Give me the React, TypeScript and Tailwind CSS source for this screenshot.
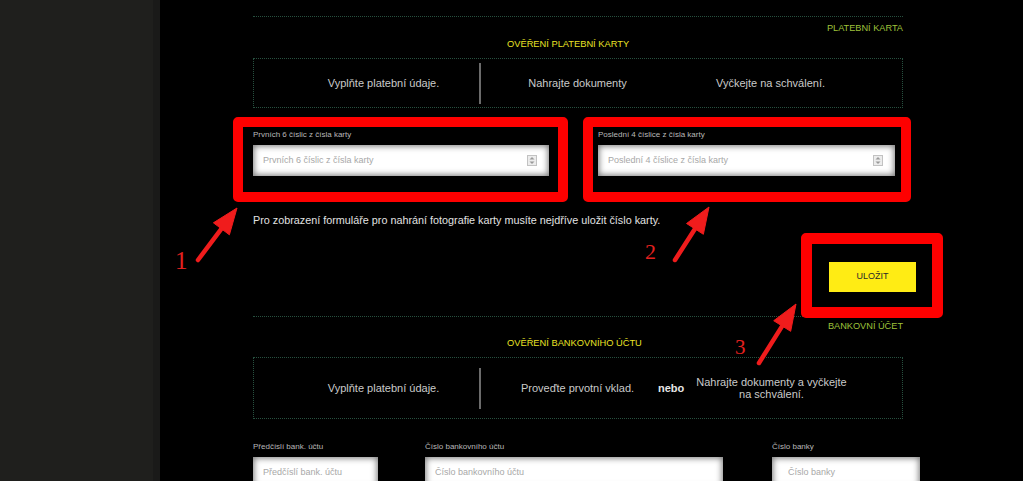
import React from "react";

type Pt = [number, number];

const Spinner = () => (
  <svg width="10" height="11" viewBox="0 0 10 11" className="shrink-0">
    <rect x="0.5" y="0.5" width="9" height="10" fill="#ececec" stroke="#c2c2c2" />
    <path d="M2.5 4.5 L5 2 L7.5 4.5 Z" fill="#999" />
    <path d="M2.5 6.5 L5 9 L7.5 6.5 Z" fill="#999" />
  </svg>
);

const Field = ({
  label,
  placeholder,
  width,
  spinner,
  className = "",
}: {
  label: string;
  placeholder: string;
  width: string;
  spinner?: boolean;
  className?: string;
}) => (
  <div className={`flex flex-col ${width} ${className}`}>
    <label className="text-[8px] leading-[10px] text-[#b8b8b8]">{label}</label>
    <div className="mt-[5px] flex h-[31px] items-center justify-between bg-white pl-[10px] pr-[12px] shadow-[inset_0_0_6px_1px_rgba(0,0,0,0.55)]">
      <span className="text-[9px] text-[#a8a8a8]">{placeholder}</span>
      {spinner && <Spinner />}
    </div>
  </div>
);

const Divider = () => <div className="h-[41px] w-[2px] shrink-0 bg-[#6b6b6b]" />;

const Arrow = ({ tail, tip }: { tail: Pt; tip: Pt }) => {
  const dx = tip[0] - tail[0];
  const dy = tip[1] - tail[1];
  const len = Math.hypot(dx, dy);
  const ux = dx / len;
  const uy = dy / len;
  const bx = tip[0] - ux * 26;
  const by = tip[1] - uy * 26;
  const px = -uy * 10;
  const py = ux * 10;
  return (
    <g fill="#f01c1c" stroke="#f01c1c">
      <line x1={tail[0]} y1={tail[1]} x2={bx + ux * 4} y2={by + uy * 4} strokeWidth="4.5" strokeLinecap="round" />
      <polygon
        points={`${tip[0]},${tip[1]} ${bx + px},${by + py} ${bx - px},${by - py}`}
        strokeWidth="1"
        strokeLinejoin="round"
      />
    </g>
  );
};

export default function App() {
  return (
    <div className="relative flex h-[481px] w-[1023px] overflow-hidden bg-black font-['Liberation_Sans',Arial,sans-serif]">
      <aside className="w-[153px] shrink-0 bg-[#1f1f1d]" />
      <div className="w-[7px] shrink-0 bg-[#1a1a19]" />

      <main className="flex-1 bg-black">
        <div className="ml-[93px] w-[667px] pt-[16px]">
          {/* platební karta */}
          <div className="w-[650px] border-t border-dotted border-[#27503f]" />
          <div className="mt-[5px] w-[650px] text-right text-[9.2px] leading-[12px] text-[#9ec23a]">
            PLATEBNÍ KARTA
          </div>
          <div className="mt-[4px] pl-[254px] text-[9.3px] leading-[12px] text-[#e9e325]">
            OVĚŘENÍ PLATEBNÍ KARTY
          </div>
          <div className="mt-[8px] flex h-[50px] w-[650px] items-center border border-dotted border-[#27503f] px-[34px] text-[11px] text-[#cacaca]">
            <div className="w-[191px] text-center">Vyplňte platební údaje.</div>
            <Divider />
            <div className="w-[193px] text-center">Nahrajte dokumenty</div>
            <div className="w-[193px] text-center">Vyčkejte na schválení.</div>
          </div>

          <div className="mt-[22px] flex">
            <Field
              label="Prvních 6 číslic z čísla karty"
              placeholder="Prvních 6 číslic z čísla karty"
              width="w-[296px]"
              spinner
            />
            <Field
              label="Poslední 4 číslice z čísla karty"
              placeholder="Poslední 4 číslice z čísla karty"
              width="w-[297px]"
              className="ml-[49px]"
              spinner
            />
          </div>

          <p className="mt-[37px] text-[10.8px] leading-[14px] text-[#e2e2e2]">
            Pro zobrazení formuláře pro nahrání fotografie karty musíte nejdříve uložit číslo karty.
          </p>

          <div className="mt-[35px] flex justify-end pr-[4px]">
            <button className="h-[30px] w-[87px] bg-[#ffec14] text-[9px] text-[#2a2a2a]">ULOŽIT</button>
          </div>

          {/* bankovní účet */}
          <div className="mt-[24px] w-[650px] border-t border-dotted border-[#27503f]" />
          <div className="mt-[3px] w-[650px] text-right text-[9.2px] leading-[12px] text-[#9ec23a]">
            BANKOVNÍ ÚČET
          </div>
          <div className="mt-[5px] pl-[254px] text-[9.3px] leading-[12px] text-[#e9e325]">
            OVĚŘENÍ BANKOVNÍHO ÚČTU
          </div>
          <div className="mt-[8px] flex h-[62px] w-[650px] items-center border border-dotted border-[#27503f] px-[34px] text-[11px] leading-[12px] text-[#cacaca]">
            <div className="w-[191px] text-center">Vyplňte platební údaje.</div>
            <Divider />
            <div className="w-[177px] pl-[16px] text-center">Proveďte prvotní vklad.</div>
            <div className="w-[25px] text-center font-bold text-[#e6e6e6]">nebo</div>
            <div className="w-[177px] text-center">
              Nahrajte dokumenty a vyčkejte
              <br />
              na schválení.
            </div>
          </div>

          <div className="mt-[23px] flex">
            <Field label="Předčíslí bank. účtu" placeholder="Předčíslí bank. účtu" width="w-[125px]" />
            <Field
              label="Číslo bankovního účtu"
              placeholder="Číslo bankovního účtu"
              width="w-[298px]"
              className="ml-[47px]"
            />
            <Field
              label="Číslo banky"
              placeholder="Číslo banky"
              width="w-[148px]"
              className="ml-[49px] [&>div]:pl-[16px]"
            />
          </div>
        </div>
      </main>

      {/* annotations */}
      <div className="pointer-events-none absolute left-[233px] top-[117px] h-[85px] w-[335px] rounded-[5px] border-[10px] border-[#fe0000]" />
      <div className="pointer-events-none absolute left-[583px] top-[117px] h-[85px] w-[328px] rounded-[5px] border-[10px] border-[#fe0000]" />
      <div className="pointer-events-none absolute left-[801px] top-[233px] h-[85px] w-[142px] rounded-[5px] border-[11px] border-[#fe0000]" />

      <svg className="pointer-events-none absolute left-0 top-0" width="1023" height="481">
        <Arrow tail={[198, 260]} tip={[237, 208]} />
        <Arrow tail={[675, 260]} tip={[709, 207]} />
        <Arrow tail={[759, 363]} tip={[796, 304]} />
      </svg>
      <span className="absolute left-[175px] top-[248px] font-['Liberation_Serif',serif] text-[25px] leading-[25px] text-[#e3201f]">
        1
      </span>
      <span className="absolute left-[645px] top-[241px] font-['Liberation_Serif',serif] text-[22px] leading-[22px] text-[#e3201f]">
        2
      </span>
      <span className="absolute left-[735px] top-[337px] font-['Liberation_Serif',serif] text-[21px] leading-[21px] text-[#e3201f]">
        3
      </span>
    </div>
  );
}
